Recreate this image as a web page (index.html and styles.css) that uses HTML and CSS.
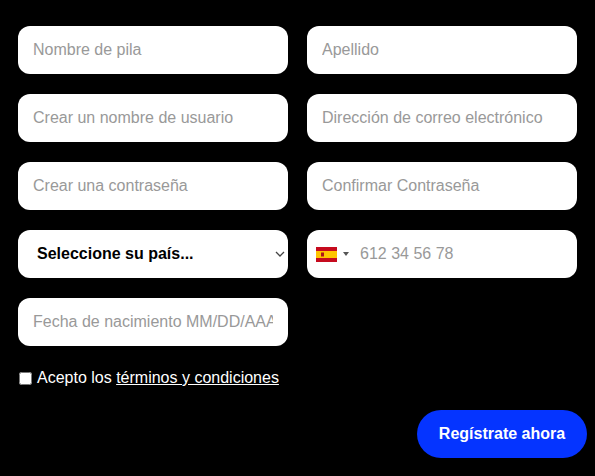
FILE: index.html
```html
<!DOCTYPE html>
<html lang="es">
<head>
    <meta charset="UTF-8">
    <meta name="viewport" content="width=device-width, initial-scale=1.0">
    <title>Registro</title>
    <link rel="stylesheet" href="styles.css">
</head>
<body>

<form class="signup">
    <div class="grid">
        <input type="text" placeholder="Nombre de pila">
        <input type="text" placeholder="Apellido">
        <input type="text" placeholder="Crear un nombre de usuario">
        <input type="email" placeholder="Dirección de correo electrónico">
        <input type="password" placeholder="Crear una contraseña">
        <input type="password" placeholder="Confirmar Contraseña">

        <div class="field country">
            <span>Seleccione su país...</span>
            <svg class="chevron" width="10" height="6" viewBox="0 0 10 6"><path d="M1 1l4 4 4-4" fill="none" stroke="#444" stroke-width="1.3"/></svg>
        </div>

        <div class="field phone">
            <svg class="flag" width="21" height="15" viewBox="0 0 21 15">
                <rect width="21" height="15" fill="#c60b1e"/>
                <rect y="4" width="21" height="7" fill="#ffc400"/>
                <rect x="5" y="5.5" width="3" height="4" fill="#ad1519"/>
            </svg>
            <span class="caret"></span>
            <input type="tel" placeholder="612 34 56 78">
        </div>

        <input class="date" type="text" placeholder="Fecha de nacimiento MM/DD/AAAA">
    </div>

    <label class="terms">
        <input type="checkbox">
        <span>Acepto los <a href="#">términos y condiciones</a></span>
    </label>

    <div class="actions">
        <button type="button">Regístrate ahora</button>
    </div>
</form>

</body>
</html>
```

FILE: styles.css
```css
body {
    margin: 0;
    background-color: #000;
    font-family: "Liberation Sans", Arial, sans-serif;
    color: #fff;
}
.signup {
    padding: 26px 8px 18px 18px;
}
.grid {
    display: grid;
    grid-template-columns: 270px 270px;
    grid-auto-rows: 48px;
    column-gap: 19px;
    row-gap: 20px;
}
input[type="text"],
input[type="email"],
input[type="password"] {
    box-sizing: border-box;
    width: 100%;
    height: 48px;
    padding: 0 15px;
    border: none;
    border-radius: 12px;
    background-color: #fff;
    font-family: inherit;
    font-size: 16px;
    color: #000;
}
input::placeholder {
    color: #999;
    opacity: 1;
}
.field {
    display: flex;
    align-items: center;
    border-radius: 12px;
    background-color: #fff;
}
.country {
    justify-content: space-between;
    padding: 0 3px 0 19px;
    font-size: 16px;
    font-weight: bold;
    color: #000;
}
.phone {
    padding-left: 9px;
}
.flag {
    flex-shrink: 0;
}
.caret {
    flex-shrink: 0;
    margin-left: 6px;
    border-top: 4px solid #555;
    border-left: 3px solid transparent;
    border-right: 3px solid transparent;
}
.phone input {
    box-sizing: border-box;
    flex: 1;
    min-width: 0;
    margin-left: 11px;
    padding: 0;
    border: none;
    outline: none;
    background: none;
    font-family: inherit;
    font-size: 16px;
}
.terms {
    display: flex;
    align-items: center;
    margin-top: 22px;
    font-size: 16px;
    line-height: 20px;
}
.terms input {
    width: 13px;
    height: 13px;
    margin: 0 5px 0 1px;
}
.terms a {
    color: #fff;
}
.actions {
    display: flex;
    justify-content: flex-end;
    margin-top: 22px;
}
.actions button {
    width: 170px;
    height: 48px;
    border: none;
    border-radius: 24px;
    background-color: #0534ff;
    color: #fff;
    font-family: inherit;
    font-size: 16px;
    font-weight: bold;
    cursor: pointer;
}
```
